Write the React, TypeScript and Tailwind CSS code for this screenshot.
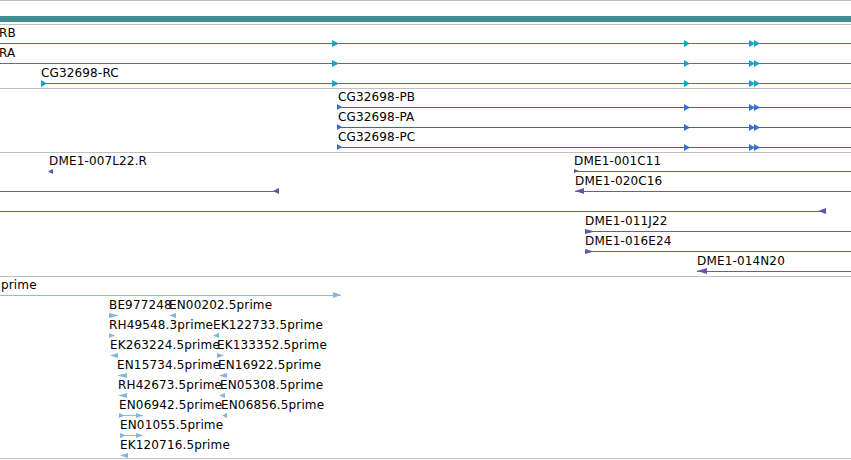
type Head = { x: number; w: number; h: number; dir: "l" | "r" };

type Feature = {
  y: number;
  label?: string;
  lx?: number;
  line?: [number, number];
  heads: Head[];
};

type Track = {
  height: string;
  lineColor: string;
  headColor: string;
  features: Feature[];
};

const exonHeads = (start?: number): Head[] => [
  ...(start !== undefined ? [{ x: start, w: 6, h: 7, dir: "r" as const }] : []),
  { x: 332, w: 7, h: 7, dir: "r" },
  { x: 684, w: 6, h: 7, dir: "r" },
  { x: 749, w: 6, h: 7, dir: "r" },
  { x: 754, w: 6, h: 7, dir: "r" },
];

const proteinHeads: Head[] = [
  { x: 337, w: 5, h: 6, dir: "r" },
  { x: 684, w: 6, h: 7, dir: "r" },
  { x: 749, w: 6, h: 7, dir: "r" },
  { x: 754, w: 6, h: 7, dir: "r" },
];

const tracks: Track[] = [
  {
    height: "h-[64px]",
    lineColor: "#1a8aa7",
    headColor: "#16a3c6",
    features: [
      { y: 18, label: "RB", lx: -1, line: [0, 851], heads: exonHeads() },
      { y: 38, label: "RA", lx: -1, line: [0, 851], heads: exonHeads() },
      { y: 58, label: "CG32698-RC", lx: 41, line: [41, 851], heads: exonHeads(41) },
    ],
  },
  {
    height: "h-[64px]",
    lineColor: "#3a63bf",
    headColor: "#3a6dd6",
    features: [
      { y: 18, label: "CG32698-PB", lx: 338, line: [337, 851], heads: proteinHeads },
      { y: 38, label: "CG32698-PA", lx: 338, line: [337, 851], heads: proteinHeads },
      { y: 58, label: "CG32698-PC", lx: 338, line: [337, 851], heads: proteinHeads },
    ],
  },
  {
    height: "h-[124px]",
    lineColor: "#6c59a8",
    headColor: "#6a4fad",
    features: [
      { y: 18, label: "DME1-007L22.R", lx: 49, heads: [{ x: 48, w: 5, h: 5, dir: "l" }] },
      { y: 18, label: "DME1-001C11", lx: 574, line: [574, 851], heads: [{ x: 574, w: 5, h: 4, dir: "r" }] },
      { y: 38, line: [0, 279], heads: [{ x: 273, w: 6, h: 6, dir: "l" }] },
      { y: 38, label: "DME1-020C16", lx: 575, line: [575, 851], heads: [{ x: 575, w: 9, h: 6, dir: "l" }] },
      { y: 58, line: [0, 826], heads: [{ x: 818, w: 8, h: 6, dir: "l" }] },
      { y: 78, label: "DME1-011J22", lx: 585, line: [585, 851], heads: [{ x: 585, w: 10, h: 5, dir: "r" }] },
      { y: 98, label: "DME1-016E24", lx: 585, line: [585, 851], heads: [{ x: 585, w: 9, h: 5, dir: "r" }] },
      { y: 118, label: "DME1-014N20", lx: 697, line: [697, 851], heads: [{ x: 697, w: 10, h: 6, dir: "l" }] },
    ],
  },
  {
    height: "h-[182px]",
    lineColor: "#86bde3",
    headColor: "#7fb7e0",
    features: [
      { y: 18, label: "prime", lx: 1, line: [0, 341], heads: [{ x: 333, w: 8, h: 6, dir: "r" }] },
      { y: 38, label: "BE977248", lx: 109, heads: [{ x: 109, w: 10, h: 5, dir: "r" }] },
      { y: 38, label: "EN00202.5prime", lx: 169, heads: [{ x: 169, w: 7, h: 5, dir: "l" }] },
      { y: 58, label: "RH49548.3prime", lx: 109, heads: [{ x: 109, w: 6, h: 5, dir: "r" }] },
      { y: 58, label: "EK122733.5prime", lx: 213, heads: [{ x: 213, w: 6, h: 5, dir: "l" }] },
      { y: 78, label: "EK263224.5prime", lx: 110, heads: [{ x: 110, w: 8, h: 5, dir: "l" }] },
      { y: 78, label: "EK133352.5prime", lx: 217, heads: [{ x: 217, w: 7, h: 5, dir: "r" }] },
      { y: 98, label: "EN15734.5prime", lx: 117, heads: [{ x: 117, w: 10, h: 5, dir: "l" }] },
      { y: 98, label: "EN16922.5prime", lx: 218, heads: [{ x: 219, w: 8, h: 5, dir: "l" }] },
      { y: 118, label: "RH42673.5prime", lx: 118, heads: [{ x: 118, w: 9, h: 5, dir: "l" }] },
      { y: 118, label: "EN05308.5prime", lx: 220, heads: [{ x: 219, w: 6, h: 5, dir: "l" }] },
      {
        y: 138,
        label: "EN06942.5prime",
        lx: 119,
        line: [119, 143],
        heads: [
          { x: 119, w: 6, h: 5, dir: "r" },
          { x: 136, w: 7, h: 5, dir: "r" },
        ],
      },
      { y: 138, label: "EN06856.5prime", lx: 221, heads: [{ x: 222, w: 5, h: 5, dir: "l" }] },
      {
        y: 158,
        label: "EN01055.5prime",
        lx: 120,
        line: [120, 143],
        heads: [
          { x: 120, w: 6, h: 5, dir: "r" },
          { x: 136, w: 7, h: 5, dir: "r" },
        ],
      },
      { y: 178, label: "EK120716.5prime", lx: 120, heads: [{ x: 120, w: 8, h: 5, dir: "l" }] },
    ],
  },
];

function ArrowHead({ head, y, color }: { head: Head; y: number; color: string }) {
  const { x, w, h, dir } = head;
  const points = dir === "r" ? `0,0 ${w},${h / 2} 0,${h}` : `${w},0 0,${h / 2} ${w},${h}`;

  return (
    <svg
      className="absolute"
      style={{ left: x, top: y - Math.floor(h / 2) }}
      width={w}
      height={h}
      viewBox={`0 0 ${w} ${h}`}
    >
      <polygon points={points} fill={color} />
    </svg>
  );
}

function FeatureRow({ feature, lineColor, headColor }: { feature: Feature; lineColor: string; headColor: string }) {
  return (
    <>
      {feature.label && (
        <span
          className="absolute whitespace-nowrap text-[12px] leading-[14px] tracking-[0.15px] text-black"
          style={{ left: feature.lx, top: feature.y - 17 }}
        >
          {feature.label}
        </span>
      )}
      {feature.line && (
        <div
          className="absolute h-px"
          style={{
            left: feature.line[0],
            top: feature.y,
            width: feature.line[1] - feature.line[0],
            backgroundColor: lineColor,
          }}
        />
      )}
      {feature.heads.map((head, i) => (
        <ArrowHead key={i} head={head} y={feature.y} color={headColor} />
      ))}
    </>
  );
}

export default function App() {
  return (
    <div className="flex h-[460px] w-[851px] flex-col overflow-hidden bg-white font-['DejaVu_Sans',sans-serif]">
      <div className="h-px bg-[#c0c0c0]" />
      <div className="h-[15px]" />
      <div className="h-[6px] bg-[#428f93]" />
      <div className="h-[2px]" />
      <div className="h-px bg-[#c0c0c0]" />

      {tracks.map((track, i) => (
        <div key={i} className={`relative shrink-0 overflow-hidden border-b border-[#c0c0c0] ${track.height}`}>
          {track.features.map((feature, j) => (
            <FeatureRow key={j} feature={feature} lineColor={track.lineColor} headColor={track.headColor} />
          ))}
        </div>
      ))}
    </div>
  );
}
